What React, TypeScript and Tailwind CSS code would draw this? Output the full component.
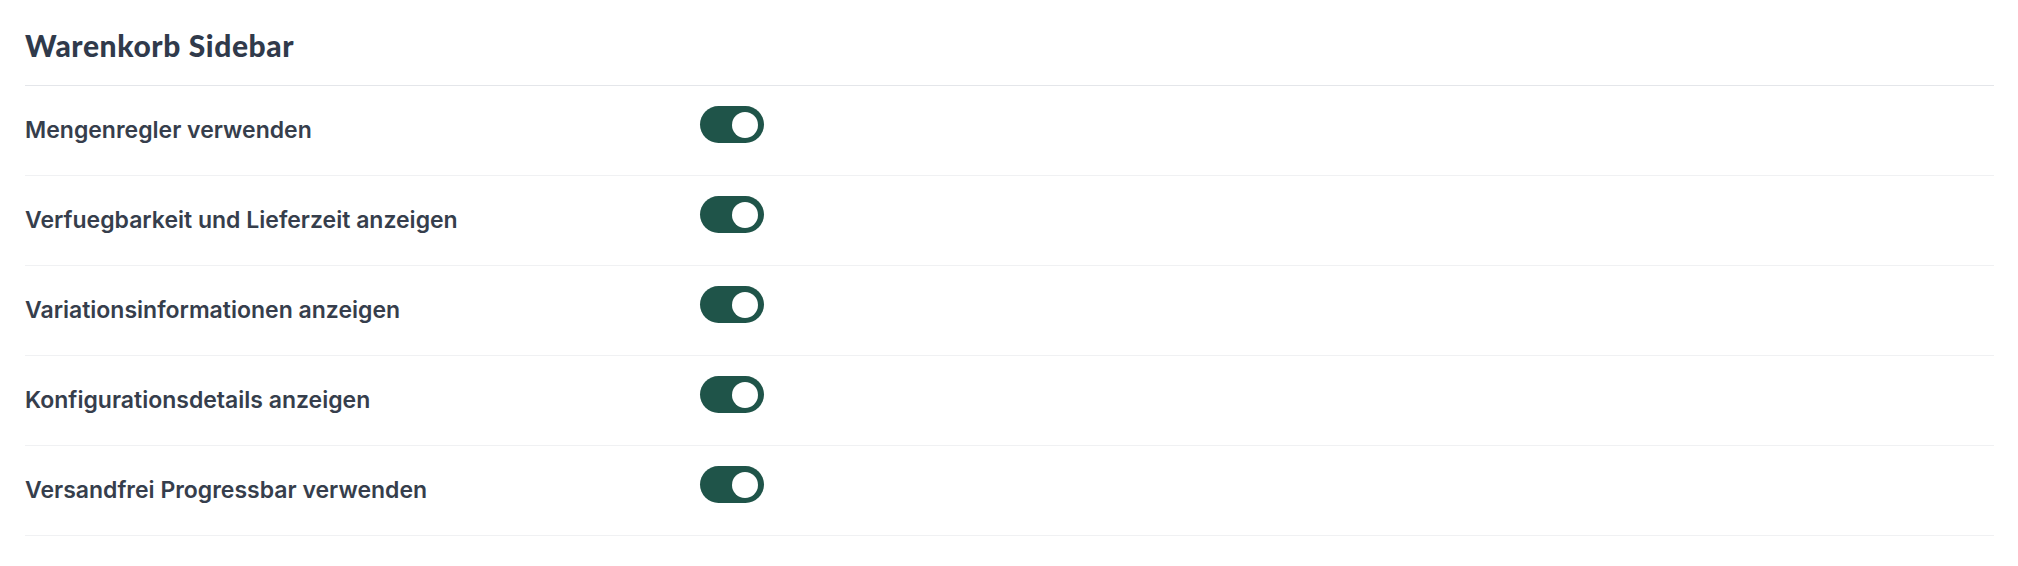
import React from 'react';

const settings = [
  { id: 'quantity', label: 'Mengenregler verwenden', enabled: true },
  { id: 'availability', label: 'Verfuegbarkeit und Lieferzeit anzeigen', enabled: true },
  { id: 'variations', label: 'Variationsinformationen anzeigen', enabled: true },
  { id: 'configuration', label: 'Konfigurationsdetails anzeigen', enabled: true },
  { id: 'shipping', label: 'Versandfrei Progressbar verwenden', enabled: true },
];

const Toggle: React.FC<{ checked: boolean; onChange: () => void }> = ({ checked, onChange }) => (
  <button
    type="button"
    role="switch"
    aria-checked={checked}
    onClick={onChange}
    className={`mb-[12px] flex h-[37px] w-[64px] items-center rounded-full px-[6px] transition-colors ${
      checked ? 'justify-end bg-[#1f5449]' : 'justify-start bg-[#d1d5db]'
    }`}
  >
    <span className="block h-[26px] w-[26px] rounded-full bg-white" />
  </button>
);

export default function App() {
  const [values, setValues] = React.useState<Record<string, boolean>>(
    Object.fromEntries(settings.map((s) => [s.id, s.enabled]))
  );

  return (
    <div className="min-h-[566px] bg-white pl-[25px] pr-[24px]">
      {/* Header */}
      <div className="flex h-[86px] items-center border-b border-[#e4e6ea] pt-[6px]">
        <h2 className="font-['Lato',sans-serif] text-[30px] font-black tracking-[0.6px] text-[#303a4b]">
          Warenkorb Sidebar
        </h2>
      </div>

      {/* Einstellungen */}
      <div>
        {settings.map((setting) => (
          <div
            key={setting.id}
            className="grid h-[90px] grid-cols-[675px_1fr] items-center border-b border-[#f0f1f3]"
          >
            <span className="font-['Inter',sans-serif] text-[23px] font-semibold text-[#363e4c]">
              {setting.label}
            </span>
            <div className="flex items-center">
              <Toggle
                checked={values[setting.id]}
                onChange={() => setValues((v) => ({ ...v, [setting.id]: !v[setting.id] }))}
              />
            </div>
          </div>
        ))}
      </div>
    </div>
  );
}
